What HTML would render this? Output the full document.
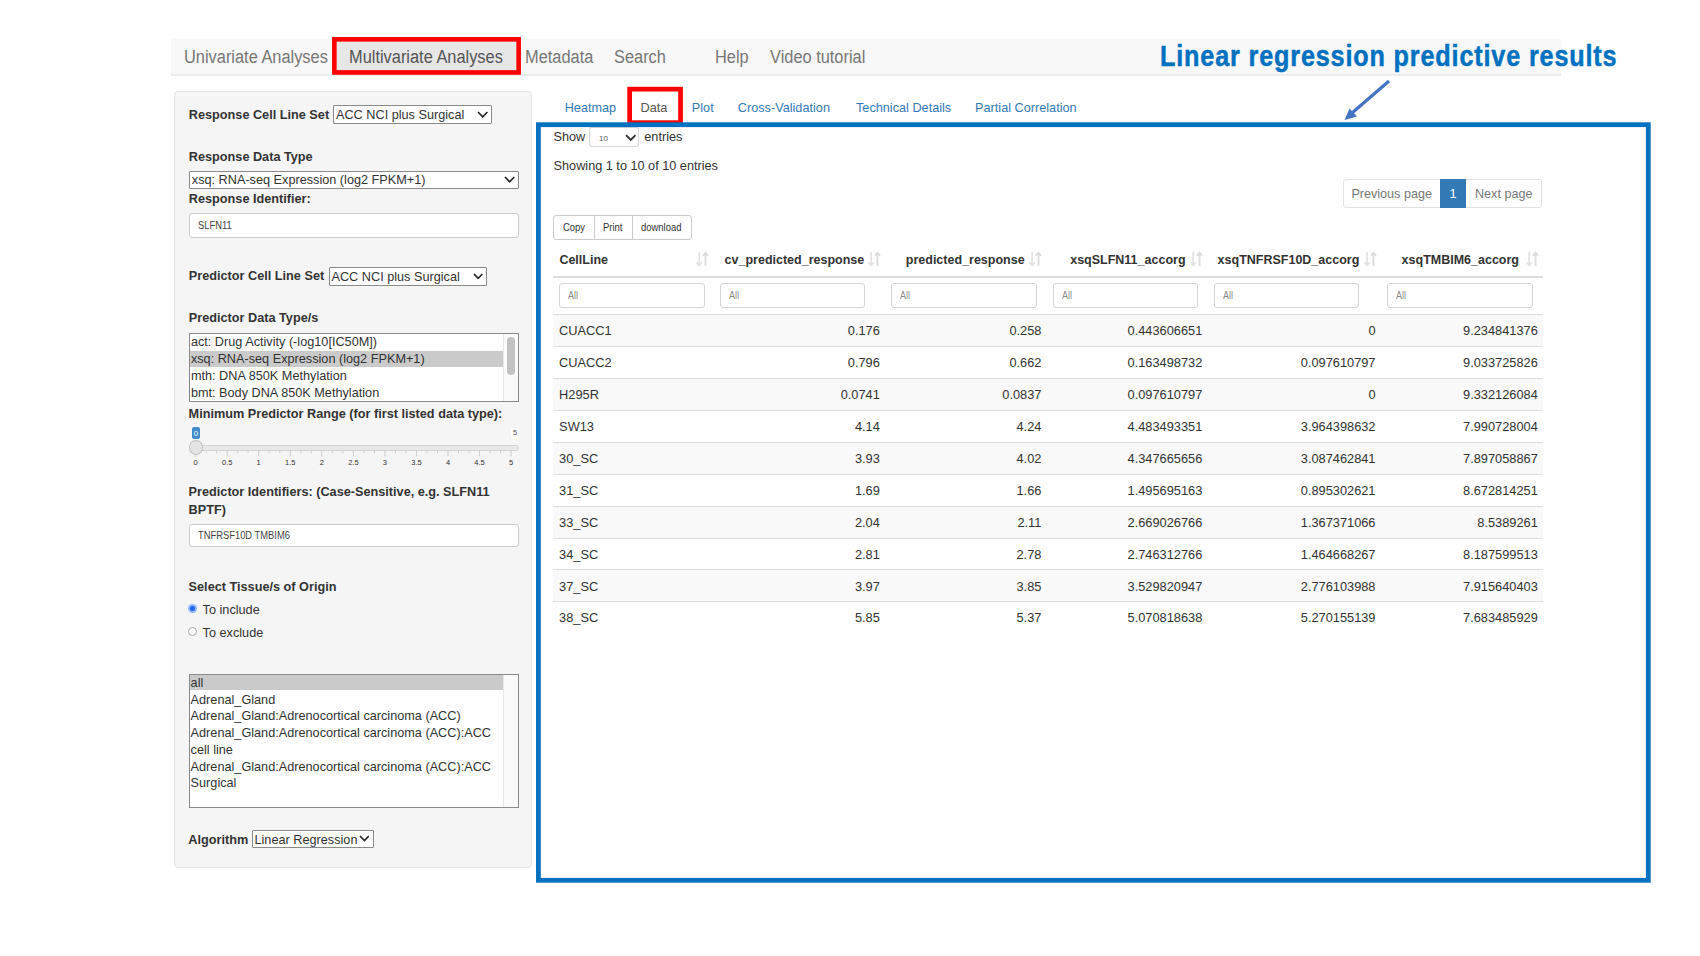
<!DOCTYPE html>
<html><head><meta charset="utf-8">
<style>
html,body{margin:0;padding:0;width:1700px;height:956px;overflow:hidden;background:#fff;font-family:"Liberation Sans",sans-serif;}
.a{position:absolute;}
.t{position:absolute;line-height:1;white-space:nowrap;}
.nav{left:171px;top:39px;width:1390px;height:35px;background:#f8f8f8;border-bottom:2px solid #ebebeb;}
.nv{font-size:18px;color:#777;top:47.9px;transform:scaleX(0.91);transform-origin:0 0;}
.tab{font-size:12.7px;color:#337ab7;top:102px;}
.lbl{font-size:12.7px;font-weight:bold;color:#333;}
.sel{position:absolute;background:#fff;border:1px solid #8a8a8a;box-sizing:border-box;border-radius:1px;}
.inp{position:absolute;background:#fff;border:1px solid #ccc;box-sizing:border-box;border-radius:3px;}
.txt{font-size:12.7px;color:#333;}
.chev{position:absolute;width:6px;height:6px;border-right:1.6px solid #222;border-bottom:1.6px solid #222;transform:rotate(45deg);}
</style></head><body>

<!-- NAV -->
<div class="a nav"></div>
<div class="a" style="left:336px;top:41px;width:181px;height:33px;background:#e7e7e7;"></div>
<div class="t nv" style="left:184.3px;">Univariate Analyses</div>
<div class="t nv" style="left:348.8px;color:#555;">Multivariate Analyses</div>
<div class="t nv" style="left:524.5px;">Metadata</div>
<div class="t nv" style="left:614.2px;">Search</div>
<div class="t nv" style="left:714.7px;">Help</div>
<div class="t nv" style="left:770px;">Video tutorial</div>
<svg class="a" style="left:0;top:0" width="700" height="130"><rect x="334.35" y="39.35" width="184.3" height="33.1" fill="none" stroke="#ff0000" stroke-width="4.6"/></svg>

<!-- TITLE -->
<div class="t" style="left:1159.5px;top:41.1px;font-size:30px;font-weight:bold;color:#0070c0;-webkit-text-stroke:0.5px #0070c0;letter-spacing:1px;word-spacing:0px;transform:scaleX(0.84);transform-origin:0 0;">Linear regression predictive results</div>
<svg class="a" style="left:0;top:0" width="1700" height="956">
  <line x1="1389" y1="81" x2="1352" y2="113" stroke="#4472c4" stroke-width="3.2"/>
  <polygon points="1344.5,120 1349.5,108.5 1357,116.5" fill="#4472c4"/>
</svg>

<!-- SIDEBAR -->
<div class="a" style="left:174px;top:91px;width:358px;height:776.5px;box-sizing:border-box;background:#f5f5f5;border:1px solid #e3e3e3;border-radius:4px;"></div>

<div class="t lbl" style="left:188.8px;top:108.85px;">Response Cell Line Set</div>
<div class="sel" style="left:332.5px;top:105px;width:159px;height:18.5px;"></div>
<div class="t txt" style="left:336px;top:108.85px;">ACC NCI plus Surgical</div>

<div class="t lbl" style="left:188.8px;top:150.95px;">Response Data Type</div>
<div class="sel" style="left:188.5px;top:170.5px;width:330.5px;height:18.5px;"></div>
<div class="t txt" style="left:191.8px;top:174.3px;">xsq: RNA-seq Expression (log2 FPKM+1)</div>

<div class="t lbl" style="left:188.8px;top:193.25px;">Response Identifier:</div>
<div class="inp" style="left:189px;top:213px;width:330px;height:25px;"></div>
<div class="t" style="left:197.8px;top:219.5px;font-size:10.9px;color:#444;transform:scaleX(0.86);transform-origin:0 0;">SLFN11</div>

<div class="t lbl" style="left:188.8px;top:270.05px;">Predictor Cell Line Set</div>
<div class="sel" style="left:328.5px;top:267px;width:158.5px;height:18.5px;"></div>
<div class="t txt" style="left:331.5px;top:270.7px;">ACC NCI plus Surgical</div>

<div class="t lbl" style="left:188.8px;top:312.45px;">Predictor Data Type/s</div>
<div class="a" style="left:188.5px;top:332.5px;width:330.5px;height:69px;box-sizing:border-box;background:#fff;border:1px solid #8a8a8a;"></div>

<div class="t lbl" style="left:188.6px;top:408.15px;">Minimum Predictor Range (for first listed data type):</div>

<div class="t lbl" style="left:188.6px;top:485.65px;">Predictor Identifiers: (Case-Sensitive, e.g. SLFN11</div>
<div class="t lbl" style="left:188.6px;top:503.55px;">BPTF)</div>
<div class="inp" style="left:188.5px;top:524px;width:330.5px;height:23px;"></div>
<div class="t" style="left:198.1px;top:530px;font-size:10.9px;color:#444;transform:scaleX(0.86);transform-origin:0 0;">TNFRSF10D TMBIM6</div>

<div class="t lbl" style="left:188.6px;top:581.45px;">Select Tissue/s of Origin</div>
<div class="t txt" style="left:202.6px;top:604.15px;color:#333;">To include</div>
<div class="t txt" style="left:202.6px;top:626.75px;color:#333;">To exclude</div>
<div class="a" style="left:188.5px;top:673.5px;width:330.5px;height:134.5px;box-sizing:border-box;background:#fff;border:1px solid #8a8a8a;"></div>

<div class="t lbl" style="left:188.3px;top:833.75px;">Algorithm</div>
<div class="sel" style="left:251.5px;top:830px;width:122px;height:18px;"></div>
<div class="t txt" style="left:254.5px;top:833.5px;">Linear Regression</div>

<!-- SIDE_START -->
<svg class="a" style="left:476.6px;top:110.6px" width="11.4" height="7.2"><path d="M1 1L5.70 5.87L10.40 1" stroke="#222" stroke-width="1.6" fill="none"/></svg>
<svg class="a" style="left:503.7px;top:176.0px" width="11.3" height="7.1"><path d="M1 1L5.65 5.82L10.30 1" stroke="#222" stroke-width="1.6" fill="none"/></svg>
<svg class="a" style="left:472.6px;top:272.9px" width="10.4" height="6.6"><path d="M1 1L5.20 5.32L9.40 1" stroke="#222" stroke-width="1.6" fill="none"/></svg>
<svg class="a" style="left:358.6px;top:835.4px" width="10.8" height="6.8"><path d="M1 1L5.40 5.54L9.80 1" stroke="#222" stroke-width="1.6" fill="none"/></svg>
<div class="a" style="left:189.5px;top:350.8px;width:313.5px;height:16.5px;background:#cacaca;"></div>
<div class="a" style="left:503px;top:333.5px;width:15px;height:67px;background:#fafafa;border-left:1px solid #e8e8e8;box-sizing:border-box;"></div>
<div class="a" style="left:507px;top:336.5px;width:8px;height:38px;background:#c2c2c2;border-radius:4px;"></div>
<div class="t" style="left:190.9px;top:335.55px;font-size:12.7px;color:#333;">act: Drug Activity (-log10[IC50M])</div>
<div class="t" style="left:190.9px;top:352.55px;font-size:12.7px;color:#333;">xsq: RNA-seq Expression (log2 FPKM+1)</div>
<div class="t" style="left:190.9px;top:369.55px;font-size:12.7px;color:#333;">mth: DNA 850K Methylation</div>
<div class="t" style="left:190.9px;top:386.55px;font-size:12.7px;color:#333;">bmt: Body DNA 850K Methylation</div>
<div class="a" style="left:189.5px;top:675.4px;width:313.3px;height:15px;background:#cacaca;"></div>
<div class="a" style="left:502.8px;top:674.5px;width:15.2px;height:132px;background:#fafafa;border-left:1px solid #e8e8e8;box-sizing:border-box;"></div>
<div class="t" style="left:190.6px;top:676.75px;font-size:12.7px;color:#333;">all</div>
<div class="t" style="left:190.6px;top:693.53px;font-size:12.7px;color:#333;">Adrenal_Gland</div>
<div class="t" style="left:190.6px;top:710.31px;font-size:12.7px;color:#333;">Adrenal_Gland:Adrenocortical carcinoma (ACC)</div>
<div class="t" style="left:190.6px;top:727.09px;font-size:12.7px;color:#333;">Adrenal_Gland:Adrenocortical carcinoma (ACC):ACC</div>
<div class="t" style="left:190.6px;top:743.87px;font-size:12.7px;color:#333;">cell line</div>
<div class="t" style="left:190.6px;top:760.65px;font-size:12.7px;color:#333;">Adrenal_Gland:Adrenocortical carcinoma (ACC):ACC</div>
<div class="t" style="left:190.6px;top:777.43px;font-size:12.7px;color:#333;">Surgical</div>
<div class="a" style="left:188.2px;top:604px;width:9px;height:9px;border-radius:50%;background:#8db7f8;"></div>
<div class="a" style="left:190.45px;top:606.25px;width:4.5px;height:4.5px;border-radius:50%;background:#2266e8;"></div>
<div class="a" style="left:188.2px;top:626.8px;width:9px;height:9px;border-radius:50%;background:#fff;border:1px solid #a8a8a8;box-sizing:border-box;"></div>
<div class="a" style="left:189.5px;top:444.5px;width:329px;height:6.2px;background:#e8e8e8;border:1px solid #d4d4d4;border-radius:3px;box-sizing:border-box;"></div>
<svg class="a" style="left:185px;top:451px" width="340" height="8"><rect x="10.10" y="0" width="1" height="5.5" fill="#c8cdd2"/><rect x="20.62" y="0" width="1" height="2.5" fill="#d0d0d0"/><rect x="31.13" y="0" width="1" height="2.5" fill="#d0d0d0"/><rect x="41.65" y="0" width="1" height="5.5" fill="#c8cdd2"/><rect x="52.17" y="0" width="1" height="2.5" fill="#d0d0d0"/><rect x="62.68" y="0" width="1" height="2.5" fill="#d0d0d0"/><rect x="73.20" y="0" width="1" height="5.5" fill="#c8cdd2"/><rect x="83.72" y="0" width="1" height="2.5" fill="#d0d0d0"/><rect x="94.23" y="0" width="1" height="2.5" fill="#d0d0d0"/><rect x="104.75" y="0" width="1" height="5.5" fill="#c8cdd2"/><rect x="115.27" y="0" width="1" height="2.5" fill="#d0d0d0"/><rect x="125.78" y="0" width="1" height="2.5" fill="#d0d0d0"/><rect x="136.30" y="0" width="1" height="5.5" fill="#c8cdd2"/><rect x="146.82" y="0" width="1" height="2.5" fill="#d0d0d0"/><rect x="157.33" y="0" width="1" height="2.5" fill="#d0d0d0"/><rect x="167.85" y="0" width="1" height="5.5" fill="#c8cdd2"/><rect x="178.37" y="0" width="1" height="2.5" fill="#d0d0d0"/><rect x="188.88" y="0" width="1" height="2.5" fill="#d0d0d0"/><rect x="199.40" y="0" width="1" height="5.5" fill="#c8cdd2"/><rect x="209.92" y="0" width="1" height="2.5" fill="#d0d0d0"/><rect x="220.43" y="0" width="1" height="2.5" fill="#d0d0d0"/><rect x="230.95" y="0" width="1" height="5.5" fill="#c8cdd2"/><rect x="241.47" y="0" width="1" height="2.5" fill="#d0d0d0"/><rect x="251.98" y="0" width="1" height="2.5" fill="#d0d0d0"/><rect x="262.50" y="0" width="1" height="5.5" fill="#c8cdd2"/><rect x="273.02" y="0" width="1" height="2.5" fill="#d0d0d0"/><rect x="283.53" y="0" width="1" height="2.5" fill="#d0d0d0"/><rect x="294.05" y="0" width="1" height="5.5" fill="#c8cdd2"/><rect x="304.57" y="0" width="1" height="2.5" fill="#d0d0d0"/><rect x="315.08" y="0" width="1" height="2.5" fill="#d0d0d0"/><rect x="325.60" y="0" width="1" height="5.5" fill="#c8cdd2"/></svg>
<div class="t" style="left:165.60px;width:60px;text-align:center;top:458.65px;font-size:7.5px;color:#333;">0</div>
<div class="t" style="left:197.15px;width:60px;text-align:center;top:458.65px;font-size:7.5px;color:#333;">0.5</div>
<div class="t" style="left:228.70px;width:60px;text-align:center;top:458.65px;font-size:7.5px;color:#333;">1</div>
<div class="t" style="left:260.25px;width:60px;text-align:center;top:458.65px;font-size:7.5px;color:#333;">1.5</div>
<div class="t" style="left:291.80px;width:60px;text-align:center;top:458.65px;font-size:7.5px;color:#333;">2</div>
<div class="t" style="left:323.35px;width:60px;text-align:center;top:458.65px;font-size:7.5px;color:#333;">2.5</div>
<div class="t" style="left:354.90px;width:60px;text-align:center;top:458.65px;font-size:7.5px;color:#333;">3</div>
<div class="t" style="left:386.45px;width:60px;text-align:center;top:458.65px;font-size:7.5px;color:#333;">3.5</div>
<div class="t" style="left:418.00px;width:60px;text-align:center;top:458.65px;font-size:7.5px;color:#333;">4</div>
<div class="t" style="left:449.55px;width:60px;text-align:center;top:458.65px;font-size:7.5px;color:#333;">4.5</div>
<div class="t" style="left:481.10px;width:60px;text-align:center;top:458.65px;font-size:7.5px;color:#333;">5</div>
<div class="a" style="left:188.5px;top:440.3px;width:14px;height:14.5px;border-radius:50%;background:#e4e4e4;border:1px solid #c0c0c0;box-sizing:border-box;"></div>
<div class="a" style="left:191.9px;top:427px;width:8.2px;height:12px;border-radius:2px;background:#428bca;"></div>
<div class="t" style="left:192px;width:8px;text-align:center;top:429.73px;font-size:8px;color:#fff;">0</div>
<div class="a" style="left:511.4px;top:427.6px;width:7.4px;height:11px;background:#fff;border-radius:2px;"></div>
<div class="t" style="left:511.5px;width:7.2px;text-align:center;top:428.65px;font-size:7.5px;color:#555;">5</div>
<!-- SIDE_END -->
<!-- TABS -->
<div class="t tab" style="left:564.7px;">Heatmap</div>
<div class="t tab" style="left:640.6px;color:#555;">Data</div>
<div class="t tab" style="left:691.8px;">Plot</div>
<div class="t tab" style="left:737.8px;">Cross-Validation</div>
<div class="t tab" style="left:856px;">Technical Details</div>
<div class="t tab" style="left:975.1px;">Partial Correlation</div>
<svg class="a" style="left:0;top:0" width="700" height="130"><rect x="629.65" y="89.15" width="50.9" height="33.5" fill="none" stroke="#ff0000" stroke-width="4.7"/></svg>

<!-- TABLE_START -->
<!-- TABLE -->
<div class="t" style="left:553.5px;top:130.6px;font-size:12.7px;color:#333;">Show</div>
<div class="inp" style="left:589.4px;top:126.5px;width:50px;height:20.5px;border-radius:2px;border-color:#d8d8d8;"></div>
<div class="t" style="left:599px;top:134.5px;font-size:8px;color:#555;">10</div>
<svg class="a" style="left:624.7px;top:133.6px" width="11.5" height="8"><path d="M1 1.2L5.75 6L10.5 1.2" stroke="#333" stroke-width="1.9" fill="none"/></svg>
<div class="t" style="left:644.3px;top:130.6px;font-size:12.7px;color:#333;">entries</div>
<div class="t" style="left:553.6px;top:159.9px;font-size:12.7px;color:#333;">Showing 1 to 10 of 10 entries</div>
<div class="a" style="left:1343px;top:179.2px;width:199.2px;height:28.4px;box-sizing:border-box;border:1px solid #e2e2e2;border-radius:3px;background:#fff;"></div>
<div class="a" style="left:1440.3px;top:179.2px;width:25.7px;height:28.4px;background:#337ab7;"></div>
<div class="a" style="left:1440.3px;top:179.2px;width:1px;height:28.4px;background:#ddd;opacity:0"></div>
<div class="t" style="left:1351.4px;top:187.8px;font-size:12.6px;color:#777;">Previous page</div>
<div class="t" style="left:1449.5px;top:187.8px;font-size:12.6px;color:#fff;">1</div>
<div class="t" style="left:1475px;top:187.8px;font-size:12.6px;color:#777;">Next page</div>
<div class="a" style="left:553.2px;top:215.4px;width:138.5px;height:25px;box-sizing:border-box;border:1px solid #ccc;border-radius:3px;background:#fff;"></div>
<div class="a" style="left:594.4px;top:215.4px;width:1px;height:24.8px;background:#ccc;"></div>
<div class="a" style="left:631.6px;top:215.4px;width:1px;height:24.8px;background:#ccc;"></div>
<div class="t" style="left:562.6px;top:221.9px;font-size:10.5px;color:#333;transform:scaleX(0.9);transform-origin:0 0;">Copy</div>
<div class="t" style="left:603.4px;top:221.9px;font-size:10.5px;color:#333;transform:scaleX(0.9);transform-origin:0 0;">Print</div>
<div class="t" style="left:640.7px;top:221.9px;font-size:10.5px;color:#333;transform:scaleX(0.9);transform-origin:0 0;">download</div>
<div class="t" style="left:559.4px;top:254.42px;font-size:12.5px;font-weight:bold;color:#333;">CellLine</div>
<svg class="a" style="left:696.4px;top:251px" width="13" height="16"><path d="M3.2 1v13M0.6 11.2l2.6 3.2 2.6-3.2" stroke="#e3e3e3" stroke-width="1.8" fill="none"/><path d="M9.5 15V1.6M6.9 4.8l2.6-3.2 2.6 3.2" stroke="#dcdcdc" stroke-width="1.8" fill="none"/></svg>
<div class="t" style="left:724.6px;top:254.42px;font-size:12.5px;font-weight:bold;color:#333;">cv_predicted_response</div>
<svg class="a" style="left:868px;top:251px" width="13" height="16"><path d="M3.2 1v13M0.6 11.2l2.6 3.2 2.6-3.2" stroke="#e3e3e3" stroke-width="1.8" fill="none"/><path d="M9.5 15V1.6M6.9 4.8l2.6-3.2 2.6 3.2" stroke="#dcdcdc" stroke-width="1.8" fill="none"/></svg>
<div class="t" style="left:905.8px;top:254.42px;font-size:12.5px;font-weight:bold;color:#333;">predicted_response</div>
<svg class="a" style="left:1029.3px;top:251px" width="13" height="16"><path d="M3.2 1v13M0.6 11.2l2.6 3.2 2.6-3.2" stroke="#e3e3e3" stroke-width="1.8" fill="none"/><path d="M9.5 15V1.6M6.9 4.8l2.6-3.2 2.6 3.2" stroke="#dcdcdc" stroke-width="1.8" fill="none"/></svg>
<div class="t" style="left:1070.2px;top:254.42px;font-size:12.5px;font-weight:bold;color:#333;">xsqSLFN11_accorg</div>
<svg class="a" style="left:1190px;top:251px" width="13" height="16"><path d="M3.2 1v13M0.6 11.2l2.6 3.2 2.6-3.2" stroke="#e3e3e3" stroke-width="1.8" fill="none"/><path d="M9.5 15V1.6M6.9 4.8l2.6-3.2 2.6 3.2" stroke="#dcdcdc" stroke-width="1.8" fill="none"/></svg>
<div class="t" style="left:1217.6px;top:254.42px;font-size:12.5px;font-weight:bold;color:#333;">xsqTNFRSF10D_accorg</div>
<svg class="a" style="left:1363.7px;top:251px" width="13" height="16"><path d="M3.2 1v13M0.6 11.2l2.6 3.2 2.6-3.2" stroke="#e3e3e3" stroke-width="1.8" fill="none"/><path d="M9.5 15V1.6M6.9 4.8l2.6-3.2 2.6 3.2" stroke="#dcdcdc" stroke-width="1.8" fill="none"/></svg>
<div class="t" style="left:1401.6px;top:254.42px;font-size:12.5px;font-weight:bold;color:#333;">xsqTMBIM6_accorg</div>
<svg class="a" style="left:1526px;top:251px" width="13" height="16"><path d="M3.2 1v13M0.6 11.2l2.6 3.2 2.6-3.2" stroke="#e3e3e3" stroke-width="1.8" fill="none"/><path d="M9.5 15V1.6M6.9 4.8l2.6-3.2 2.6 3.2" stroke="#dcdcdc" stroke-width="1.8" fill="none"/></svg>
<div class="a" style="left:553.3px;top:276px;width:990px;height:2px;background:#ddd;"></div>
<div class="inp" style="border-color:#d4d4d4;left:559.0px;top:283.4px;width:145.5px;height:24.6px;border-radius:3px;"></div>
<div class="t" style="left:568.2px;top:290.49px;font-size:11px;color:#8a8a8a;transform:scaleX(0.82);transform-origin:0 0;">All</div>
<div class="inp" style="border-color:#d4d4d4;left:719.8px;top:283.4px;width:145.5px;height:24.6px;border-radius:3px;"></div>
<div class="t" style="left:729.0px;top:290.49px;font-size:11px;color:#8a8a8a;transform:scaleX(0.82);transform-origin:0 0;">All</div>
<div class="inp" style="border-color:#d4d4d4;left:891.1px;top:283.4px;width:145.5px;height:24.6px;border-radius:3px;"></div>
<div class="t" style="left:900.3px;top:290.49px;font-size:11px;color:#8a8a8a;transform:scaleX(0.82);transform-origin:0 0;">All</div>
<div class="inp" style="border-color:#d4d4d4;left:1052.7px;top:283.4px;width:145px;height:24.6px;border-radius:3px;"></div>
<div class="t" style="left:1061.9px;top:290.49px;font-size:11px;color:#8a8a8a;transform:scaleX(0.82);transform-origin:0 0;">All</div>
<div class="inp" style="border-color:#d4d4d4;left:1213.7px;top:283.4px;width:145px;height:24.6px;border-radius:3px;"></div>
<div class="t" style="left:1222.9px;top:290.49px;font-size:11px;color:#8a8a8a;transform:scaleX(0.82);transform-origin:0 0;">All</div>
<div class="inp" style="border-color:#d4d4d4;left:1386.7px;top:283.4px;width:146.5px;height:24.6px;border-radius:3px;"></div>
<div class="t" style="left:1395.9px;top:290.49px;font-size:11px;color:#8a8a8a;transform:scaleX(0.82);transform-origin:0 0;">All</div>
<div class="a" style="left:553.3px;top:314.0px;width:990px;height:32px;box-sizing:border-box;border-top:1px solid #ddd;background:#f9f9f9;"></div>
<div class="t" style="left:559.1px;top:325.06px;font-size:12.8px;color:#333;">CUACC1</div>
<div class="t" style="right:820.2px;top:325.06px;font-size:12.8px;color:#333;">0.176</div>
<div class="t" style="right:658.6px;top:325.06px;font-size:12.8px;color:#333;">0.258</div>
<div class="t" style="right:497.7px;top:325.06px;font-size:12.8px;color:#333;">0.443606651</div>
<div class="t" style="right:324.5px;top:325.06px;font-size:12.8px;color:#333;">0</div>
<div class="t" style="right:162.2px;top:325.06px;font-size:12.8px;color:#333;">9.234841376</div>
<div class="a" style="left:553.3px;top:345.93px;width:990px;height:32px;box-sizing:border-box;border-top:1px solid #ddd;background:#fff;"></div>
<div class="t" style="left:559.1px;top:356.99px;font-size:12.8px;color:#333;">CUACC2</div>
<div class="t" style="right:820.2px;top:356.99px;font-size:12.8px;color:#333;">0.796</div>
<div class="t" style="right:658.6px;top:356.99px;font-size:12.8px;color:#333;">0.662</div>
<div class="t" style="right:497.7px;top:356.99px;font-size:12.8px;color:#333;">0.163498732</div>
<div class="t" style="right:324.5px;top:356.99px;font-size:12.8px;color:#333;">0.097610797</div>
<div class="t" style="right:162.2px;top:356.99px;font-size:12.8px;color:#333;">9.033725826</div>
<div class="a" style="left:553.3px;top:377.86px;width:990px;height:32px;box-sizing:border-box;border-top:1px solid #ddd;background:#f9f9f9;"></div>
<div class="t" style="left:559.1px;top:388.92px;font-size:12.8px;color:#333;">H295R</div>
<div class="t" style="right:820.2px;top:388.92px;font-size:12.8px;color:#333;">0.0741</div>
<div class="t" style="right:658.6px;top:388.92px;font-size:12.8px;color:#333;">0.0837</div>
<div class="t" style="right:497.7px;top:388.92px;font-size:12.8px;color:#333;">0.097610797</div>
<div class="t" style="right:324.5px;top:388.92px;font-size:12.8px;color:#333;">0</div>
<div class="t" style="right:162.2px;top:388.92px;font-size:12.8px;color:#333;">9.332126084</div>
<div class="a" style="left:553.3px;top:409.78999999999996px;width:990px;height:32px;box-sizing:border-box;border-top:1px solid #ddd;background:#fff;"></div>
<div class="t" style="left:559.1px;top:420.85px;font-size:12.8px;color:#333;">SW13</div>
<div class="t" style="right:820.2px;top:420.85px;font-size:12.8px;color:#333;">4.14</div>
<div class="t" style="right:658.6px;top:420.85px;font-size:12.8px;color:#333;">4.24</div>
<div class="t" style="right:497.7px;top:420.85px;font-size:12.8px;color:#333;">4.483493351</div>
<div class="t" style="right:324.5px;top:420.85px;font-size:12.8px;color:#333;">3.964398632</div>
<div class="t" style="right:162.2px;top:420.85px;font-size:12.8px;color:#333;">7.990728004</div>
<div class="a" style="left:553.3px;top:441.72px;width:990px;height:32px;box-sizing:border-box;border-top:1px solid #ddd;background:#f9f9f9;"></div>
<div class="t" style="left:559.1px;top:452.78px;font-size:12.8px;color:#333;">30_SC</div>
<div class="t" style="right:820.2px;top:452.78px;font-size:12.8px;color:#333;">3.93</div>
<div class="t" style="right:658.6px;top:452.78px;font-size:12.8px;color:#333;">4.02</div>
<div class="t" style="right:497.7px;top:452.78px;font-size:12.8px;color:#333;">4.347665656</div>
<div class="t" style="right:324.5px;top:452.78px;font-size:12.8px;color:#333;">3.087462841</div>
<div class="t" style="right:162.2px;top:452.78px;font-size:12.8px;color:#333;">7.897058867</div>
<div class="a" style="left:553.3px;top:473.65px;width:990px;height:32px;box-sizing:border-box;border-top:1px solid #ddd;background:#fff;"></div>
<div class="t" style="left:559.1px;top:484.71px;font-size:12.8px;color:#333;">31_SC</div>
<div class="t" style="right:820.2px;top:484.71px;font-size:12.8px;color:#333;">1.69</div>
<div class="t" style="right:658.6px;top:484.71px;font-size:12.8px;color:#333;">1.66</div>
<div class="t" style="right:497.7px;top:484.71px;font-size:12.8px;color:#333;">1.495695163</div>
<div class="t" style="right:324.5px;top:484.71px;font-size:12.8px;color:#333;">0.895302621</div>
<div class="t" style="right:162.2px;top:484.71px;font-size:12.8px;color:#333;">8.672814251</div>
<div class="a" style="left:553.3px;top:505.58px;width:990px;height:32px;box-sizing:border-box;border-top:1px solid #ddd;background:#f9f9f9;"></div>
<div class="t" style="left:559.1px;top:516.64px;font-size:12.8px;color:#333;">33_SC</div>
<div class="t" style="right:820.2px;top:516.64px;font-size:12.8px;color:#333;">2.04</div>
<div class="t" style="right:658.6px;top:516.64px;font-size:12.8px;color:#333;">2.11</div>
<div class="t" style="right:497.7px;top:516.64px;font-size:12.8px;color:#333;">2.669026766</div>
<div class="t" style="right:324.5px;top:516.64px;font-size:12.8px;color:#333;">1.367371066</div>
<div class="t" style="right:162.2px;top:516.64px;font-size:12.8px;color:#333;">8.5389261</div>
<div class="a" style="left:553.3px;top:537.51px;width:990px;height:32px;box-sizing:border-box;border-top:1px solid #ddd;background:#fff;"></div>
<div class="t" style="left:559.1px;top:548.57px;font-size:12.8px;color:#333;">34_SC</div>
<div class="t" style="right:820.2px;top:548.57px;font-size:12.8px;color:#333;">2.81</div>
<div class="t" style="right:658.6px;top:548.57px;font-size:12.8px;color:#333;">2.78</div>
<div class="t" style="right:497.7px;top:548.57px;font-size:12.8px;color:#333;">2.746312766</div>
<div class="t" style="right:324.5px;top:548.57px;font-size:12.8px;color:#333;">1.464668267</div>
<div class="t" style="right:162.2px;top:548.57px;font-size:12.8px;color:#333;">8.187599513</div>
<div class="a" style="left:553.3px;top:569.44px;width:990px;height:32px;box-sizing:border-box;border-top:1px solid #ddd;background:#f9f9f9;"></div>
<div class="t" style="left:559.1px;top:580.50px;font-size:12.8px;color:#333;">37_SC</div>
<div class="t" style="right:820.2px;top:580.50px;font-size:12.8px;color:#333;">3.97</div>
<div class="t" style="right:658.6px;top:580.50px;font-size:12.8px;color:#333;">3.85</div>
<div class="t" style="right:497.7px;top:580.50px;font-size:12.8px;color:#333;">3.529820947</div>
<div class="t" style="right:324.5px;top:580.50px;font-size:12.8px;color:#333;">2.776103988</div>
<div class="t" style="right:162.2px;top:580.50px;font-size:12.8px;color:#333;">7.915640403</div>
<div class="a" style="left:553.3px;top:601.37px;width:990px;height:32px;box-sizing:border-box;border-top:1px solid #ddd;background:#fff;"></div>
<div class="t" style="left:559.1px;top:612.43px;font-size:12.8px;color:#333;">38_SC</div>
<div class="t" style="right:820.2px;top:612.43px;font-size:12.8px;color:#333;">5.85</div>
<div class="t" style="right:658.6px;top:612.43px;font-size:12.8px;color:#333;">5.37</div>
<div class="t" style="right:497.7px;top:612.43px;font-size:12.8px;color:#333;">5.070818638</div>
<div class="t" style="right:324.5px;top:612.43px;font-size:12.8px;color:#333;">5.270155139</div>
<div class="t" style="right:162.2px;top:612.43px;font-size:12.8px;color:#333;">7.683485929</div>
<!-- TABLE_END -->
<!-- BLUE BOX -->
<svg class="a" style="left:0;top:0" width="1700" height="956"><rect x="538.4" y="124.7" width="1109.9" height="755.6" fill="none" stroke="#0070c0" stroke-width="4.8"/></svg>

</body></html>
